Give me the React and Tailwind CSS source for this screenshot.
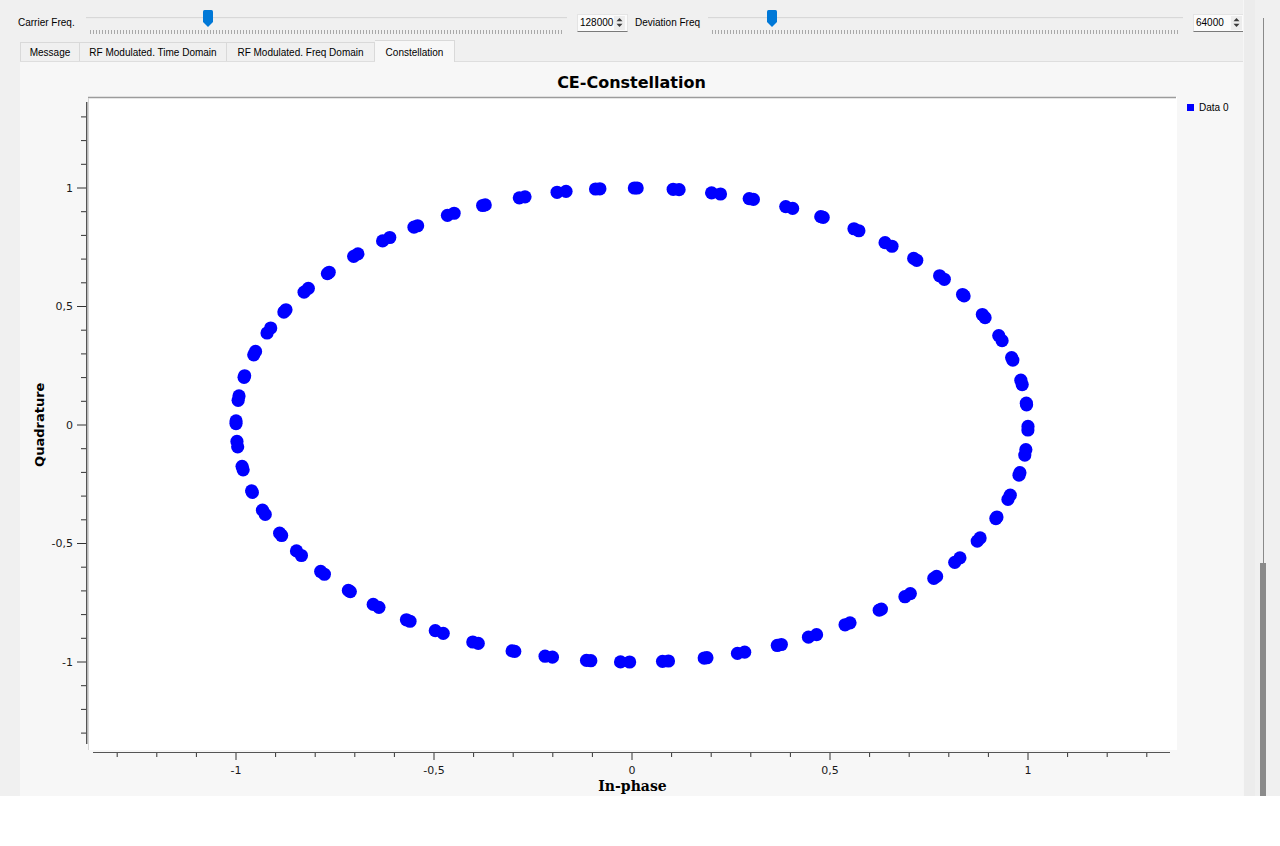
import React from 'react';

const CX = 576;
const CY = 328;
const RX = 396;
const RY = 237;

const fmt = (i) => {
  if (i === 0) return '0';
  return String(i / 10).replace('.', ',');
};

const Slider = ({ widthClass, thumbClass, tickClass }) => {
  return (
    <div className={`relative h-[26px] shrink-0 ${widthClass}`}>
      {/* groove */}
      <div className="absolute left-0 right-0 top-[7px] h-[2px] bg-[#d8d8d8] border-b border-[#ececec]" />
      {/* ticks */}
      <div
        className={`absolute top-[20px] h-[4px] bg-[repeating-linear-gradient(90deg,#a9a9a9_0,#a9a9a9_1px,transparent_1px,transparent_3px)] ${tickClass}`}
      />
      {/* thumb */}
      <svg width="10" height="17" viewBox="0 0 10 17" className={`absolute top-0 ${thumbClass}`}>
        <path d="M0 1.5 Q0 0 1.5 0 H8.5 Q10 0 10 1.5 V12 L5 17 L0 12 Z" fill="#0078d7" />
      </svg>
    </div>
  );
};

const SpinBox = ({ value, className }) => {
  return (
    <div className={`flex h-[18px] shrink-0 items-center border border-[#e4e4e4] border-b-[#7a7a7a] bg-[#fbfbfb] ${className}`}>
      <span className="flex-1 pl-[2px] text-[10px] leading-none text-black">{value}</span>
      <div className="mr-[2px] flex h-[14px] w-[11px] items-center justify-center bg-[#ededed]">
        <svg width="7" height="11" viewBox="0 0 7 11">
          <path d="M3.5 1 L6.5 4.3 H0.5 Z" fill="#3c3c3c" />
          <path d="M3.5 10 L6.5 6.7 H0.5 Z" fill="#3c3c3c" />
        </svg>
      </div>
    </div>
  );
};

const Chart = () => {
  const ticks = [];
  for (let i = -13; i <= 13; i++) ticks.push(i);

  // each sample shows up as two overlapping points a little apart on the circle
  const dots = [];
  for (let k = 0; k < 64; k++) {
    const t = Math.PI / 2 - (k * 2 * Math.PI) / 64 - 0.006;
    const d = 0.007 + ((k * 7) % 5) * 0.004;
    dots.push([t, t - d]);
  }

  return (
    <svg width="1124" height="682" className="block overflow-visible">
      {/* canvas */}
      <rect x="32" y="0" width="1089" height="653" fill="#ffffff" />
      <line x1="32" y1="0.5" x2="1120" y2="0.5" stroke="#9c9c9c" strokeWidth="1.5" />
      <line x1="32.5" y1="1" x2="32.5" y2="653" stroke="#d4d4d4" />

      {/* y axis */}
      <line x1="30.5" y1="5" x2="30.5" y2="647" stroke="#555555" />
      <line x1="31.5" y1="5" x2="31.5" y2="647" stroke="#b8b8b8" />
      {ticks.map((i) => {
        const y = CY - i * 23.7;
        const major = i % 5 === 0;
        return (
          <g key={`y${i}`}>
            <line x1={major ? 21 : 25} y1={y} x2="30" y2={y} stroke="#333333" />
            {major && (
              <text x="17" y={y + 3.5} textAnchor="end" fontSize="11" fontFamily="DejaVu Sans, sans-serif" fill="#1a1a1a">
                {fmt(i)}
              </text>
            )}
          </g>
        );
      })}

      {/* x axis */}
      <line x1="37" y1="655.5" x2="1114" y2="655.5" stroke="#555555" />
      {ticks.map((i) => {
        const x = CX + i * 39.6;
        const major = i % 5 === 0;
        return (
          <g key={`x${i}`}>
            <line x1={x} y1="656" x2={x} y2={major ? 663 : 660} stroke="#333333" />
            {major && (
              <text x={x} y="677" textAnchor="middle" fontSize="11" fontFamily="DejaVu Sans, sans-serif" fill="#1a1a1a">
                {fmt(i)}
              </text>
            )}
          </g>
        );
      })}

      {/* constellation points */}
      {dots.map((pair, k) => (
        <g key={k} fill="#0000ff">
          {pair.map((t, j) => (
            <circle key={j} cx={CX + RX * Math.cos(t)} cy={CY - RY * Math.sin(t)} r="6.6" />
          ))}
        </g>
      ))}
    </svg>
  );
};

const tabs = [
  { label: 'Message', w: 'w-[60px] border-l' },
  { label: 'RF Modulated. Time Domain', w: 'w-[147px]' },
  { label: 'RF Modulated. Freq Domain', w: 'w-[148px]' },
];

const App = () => {
  return (
    <div className="h-[846px] w-[1280px] bg-white font-['Liberation_Sans',Arial,sans-serif] text-black">
      <div className="flex h-[796px] bg-[#f0f0f0]">
        {/* main column */}
        <div className="flex w-[1243px] flex-col">
          {/* controls */}
          <div className="flex h-[40px] items-center pl-[18px] pt-[5px] text-[10px]">
            <span className="w-[68px] shrink-0 whitespace-nowrap">Carrier Freq.</span>
            <Slider widthClass="w-[481px]" thumbClass="left-[117px]" tickClass="left-[4px] right-[4px]" />
            <SpinBox value="128000" className="ml-[10px] w-[51px]" />
            <span className="ml-[7px] w-[73px] shrink-0 whitespace-nowrap">Deviation Freq</span>
            <Slider widthClass="w-[475px]" thumbClass="left-[59px]" tickClass="left-[4px] right-[4px]" />
            <SpinBox value="64000" className="ml-[10px] w-[52px]" />
          </div>

          {/* tabs */}
          <div className="ml-[20px] flex h-[21px] items-end text-[10px]">
            {tabs.map((t) => (
              <div
                key={t.label}
                className={`flex h-[19px] shrink-0 items-center justify-center border-t border-r border-[#d9d9d9] bg-[#f0f0f0] whitespace-nowrap ${t.w}`}
              >
                {t.label}
              </div>
            ))}
            <div className="relative -mb-px flex h-[22px] w-[80px] shrink-0 items-center justify-center border-t border-r border-[#d9d9d9] bg-[#f7f7f7] pt-[1px]">
              Constellation
            </div>
          </div>

          {/* panel */}
          <div className="ml-[20px] flex h-[735px] w-[1223px] flex-col border-t border-[#dedede] bg-[#f7f7f7]">
            <div className="flex h-[35px] items-center justify-center pt-[6px] font-['DejaVu_Sans',sans-serif] text-[16px] font-bold">
              CE-Constellation
            </div>
            <div className="flex flex-1">
              {/* y axis title */}
              <div className="flex h-[656px] w-[36px] items-center justify-center pl-[4px]">
                <span className="-rotate-90 whitespace-nowrap font-['DejaVu_Sans',sans-serif] text-[13px] font-bold">
                  Quadrature
                </span>
              </div>
              {/* chart */}
              <div className="flex w-[1124px] flex-col">
                <Chart />
                <div className="ml-[32px] w-[1089px] text-center font-['DejaVu_Serif',serif] text-[14px] font-bold leading-[14px]">
                  In-phase
                </div>
              </div>
              {/* legend */}
              <div className="flex-1 pl-[7px] pt-[3px]">
                <div className="flex items-center gap-[5px] text-[10px]">
                  <span className="h-[7px] w-[7px] bg-[#0000ff]" />
                  <span>Data 0</span>
                </div>
              </div>
            </div>
          </div>
        </div>

        {/* right strip + scrollbar */}
        <div className="w-[12px] border-l border-[#f6f6f6] bg-[#ececec]" />
        <div className="flex w-[25px] flex-col pl-[5px] pt-[18px]">
          <div className="flex w-[6px] flex-1 flex-col items-center">
            <div className="w-px flex-1 bg-[#8a8a8a]" />
            <div className="h-[233px] w-[6px] bg-[#8a8a8a]" />
          </div>
        </div>
      </div>
    </div>
  );
};

export default App;
